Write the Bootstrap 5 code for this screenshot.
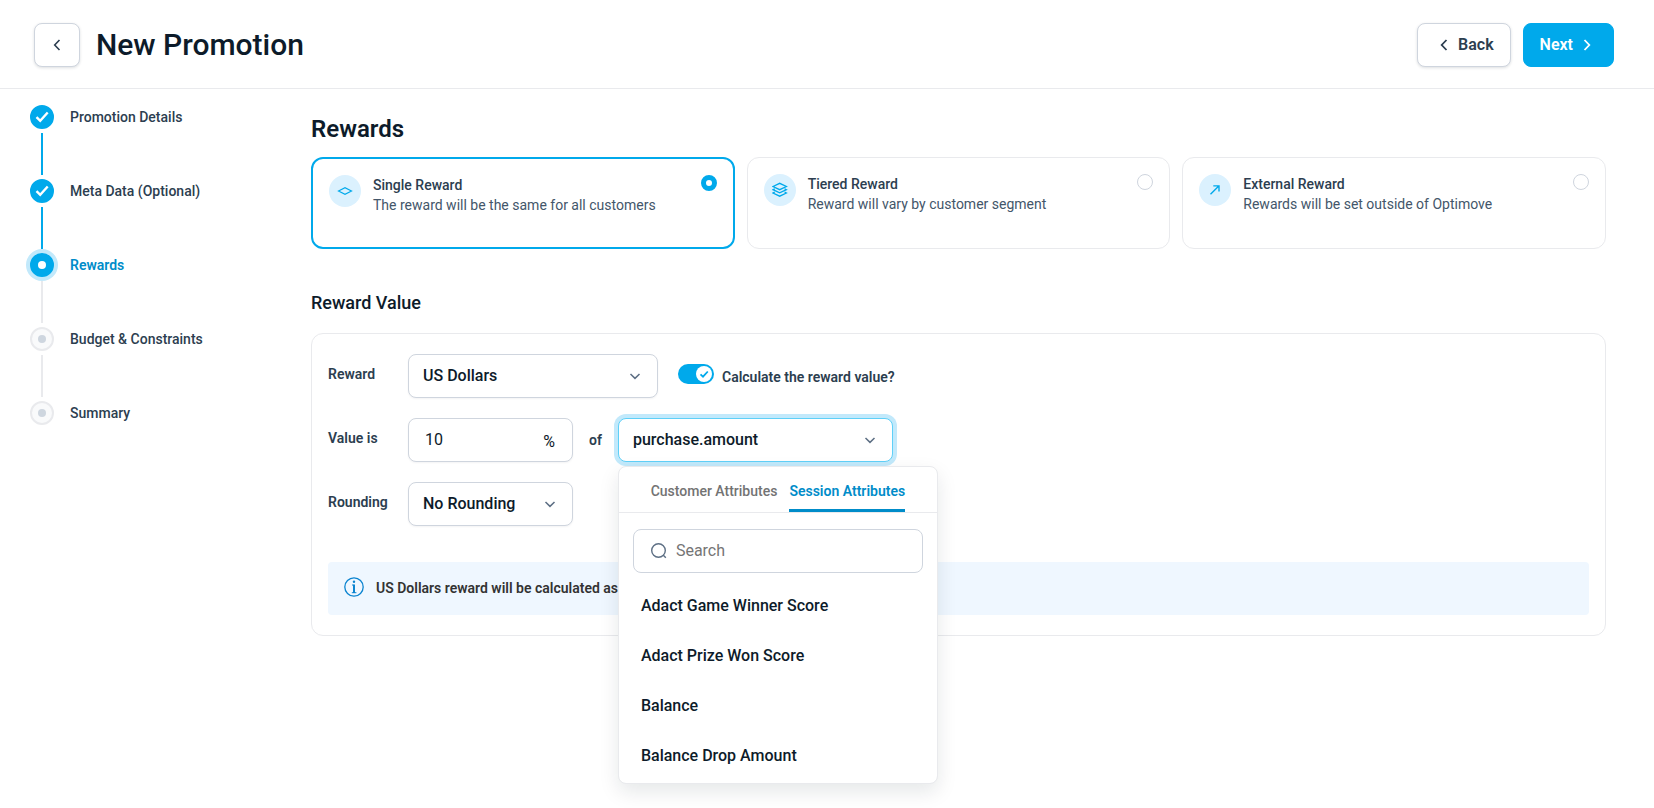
<!DOCTYPE html>
<html lang="en">
<head>
<meta charset="utf-8">
<meta name="viewport" content="width=device-width, initial-scale=1">
<title>New Promotion</title>
<link href="https://cdn.jsdelivr.net/npm/bootstrap@5.3.0/dist/css/bootstrap.min.css" rel="stylesheet">
<style>
  :root {
    --brand: #00a9eb;
    --brand-dark: #008cc9;
    --brand-soft: #dbf1fe;
    --halo: #c2e9fb;
    --ink: #0d1b2a;
    --ink-2: #2c3e50;
    --ink-3: #43566a;
    --line: #e9eaed;
    --field: #cfd5de;
  }
  body { font-family: Roboto, "Liberation Sans", sans-serif; font-size: 14px; line-height: 20px; color: var(--ink-2); }
  svg { display: block; flex: none; }

  .topbar { padding: 23px 40px 21px 34px; border-bottom: 1px solid var(--line); }
  .topbar h1 { font-size: 30px; line-height: 36px; font-weight: 500; color: var(--ink); }
  .topbar-actions { gap: 12px; }
  .action { height: 44px; border-radius: 8px; font-size: 16px; line-height: 24px; font-weight: 600; gap: 10px; }
  .action-plain { background: #fff; border: 1px solid var(--field); color: var(--ink-2); box-shadow: 0 1px 3px rgba(13, 27, 42, .14); }
  .action-square { width: 46px; }
  .action-main { background: var(--brand); border-color: var(--brand); color: #fff; }
  .action-back { padding: 0 16px 0 22px; }
  .action-next { padding: 0 22px 0 16px; }

  .stepper { width: 311px; padding: 16px 16px 0 30px; }
  .step { column-gap: 16px; }
  .step-rail { gap: 4px; margin-bottom: 4px; }
  .step-dot { width: 24px; height: 24px; border-radius: 50%; background: #f9fafb; border: 2px solid var(--line); }
  .step-dot::after { content: ""; width: 8px; height: 8px; border-radius: 50%; background: #ced6df; }
  .step-line { width: 2px; height: 42px; background: var(--line); }
  .step a { line-height: 24px; font-weight: 500; color: var(--ink-2); text-decoration: none; }
  .step-done .step-dot, .step-now .step-dot { background: var(--brand); border-color: var(--brand); }
  .step-done .step-dot::after { display: none; }
  .step-done .step-line { background: var(--brand); }
  .step-now .step-dot { box-shadow: 0 0 0 4px var(--halo); }
  .step-now .step-dot::after { background: #fff; }
  .step-now a { color: var(--brand-dark); font-weight: 600; }

  .main-col { padding: 26px 48px 48px 0; min-width: 0; }
  h2 { font-size: 24px; line-height: 28px; font-weight: 600; color: var(--ink); margin-bottom: 14px; }
  h3 { font-size: 18px; line-height: 24px; font-weight: 500; color: var(--ink); margin: 42px 0 18px; }

  .choices { --bs-gutter-x: 12px; --bs-gutter-y: 12px; }
  .choice { height: 92px; padding: 16px; border: 1px solid var(--line); border-radius: 12px; gap: 12px; cursor: pointer; }
  .choice:has(:checked) { border: 2px solid var(--brand); }
  .choice-icon { width: 32px; height: 32px; border-radius: 50%; background: var(--brand-soft); color: var(--brand); }
  .choice-title { font-weight: 500; }
  .choice-note { color: var(--ink-3); }
  .choice .form-check-input { width: 16px; height: 16px; margin: 0; flex: none; border: 1px solid var(--field); box-shadow: none; }
  .choice .form-check-input:checked { border: 5px solid var(--brand); background: #fff; }

  .panel { border: 1px solid var(--line); border-radius: 12px; padding: 20px 16px; }
  .field-row { gap: 20px; margin-bottom: 20px; }
  .field-row .form-label { width: 80px; margin: 0 -20px 0 0; line-height: 40px; font-weight: 600; }
  .field { height: 44px; border: 1px solid var(--field); border-radius: 8px; font-size: 16px; line-height: 24px; color: var(--ink); box-shadow: 0 1px 2px rgba(13, 27, 42, .05); }
  select.field { font-weight: 500; padding: 8px 40px 8px 14px; background-position: right 16px center; background-size: 12px 12px;
    background-image: url("data:image/svg+xml,%3csvg xmlns='http://www.w3.org/2000/svg' viewBox='0 0 12 12'%3e%3cpath d='M1.500 4 6 8.400 10.500 4' fill='none' stroke='%235d6f84' stroke-width='1.500'/%3e%3c/svg%3e"); }
  .w-wide { width: 250px; }
  .w-narrow { width: 165px; }
  .value-box { background: #fff; }
  .value-box input { font-size: 16px; line-height: 24px; color: var(--ink); padding: 0 0 0 16px; min-width: 0; }
  .value-box span { font-size: 16px; padding: 4px 17px 0 8px; }
  .joiner { line-height: 44px; font-weight: 600; }
  .pair { gap: 16px; }

  .form-switch { padding: 0; min-height: 0; gap: 8px; margin-top: 10px; }
  .form-switch .form-check-input { width: 36px; height: 20px; margin: 0; background-color: var(--brand); border: 0; background-position: right center;
    background-image: url("data:image/svg+xml,%3csvg xmlns='http://www.w3.org/2000/svg' viewBox='0 0 20 20'%3e%3ccircle cx='10' cy='10' r='8' fill='%23fff'/%3e%3cpath d='M6.500 10.400 9 12.700 13.800 7.500' fill='none' stroke='%2300a9eb' stroke-width='1.800'/%3e%3c/svg%3e"); }
  .form-switch label { font-weight: 600; line-height: 26px; }

  .combo { width: 275px; }
  .combo > .field { width: 100%; background: #fff; border-color: #5fd0f8; box-shadow: 0 0 0 4px var(--halo); font-weight: 500; padding: 0 16px 0 14px; }
  .combo-menu { top: 48px; left: 0; width: 320px; padding: 0 0 2px; margin: 0; border: 1px solid var(--line); border-radius: 8px; box-shadow: 0 8px 20px rgba(13, 27, 42, .1); }
  .combo-tabs { gap: 12px; border-bottom: 1px solid var(--line); }
  .combo-tabs .nav-link { padding: 14px 0 8px; border: 0; border-bottom: 3px solid transparent; border-radius: 0; background: none; font-size: 14px; line-height: 20px; font-weight: 500; color: #737373; }
  .combo-tabs .nav-link.active { color: var(--brand-dark); border-color: var(--brand-dark); font-weight: 600; background: none; }
  .search-box { margin: 16px 14px 8px; padding: 0 16px; gap: 8px; box-shadow: none; }
  .search-box input { font-size: 16px; line-height: 24px; min-width: 0; }
  .search-box input::placeholder { color: #757575; }
  .combo-menu .dropdown-item { padding: 13px 22px; font-size: 16px; line-height: 24px; font-weight: 500; color: var(--ink); }

  .note-bar { margin-top: 36px; padding: 15px 16px; gap: 12px; background: #eff7ff; border-radius: 4px; color: #333; line-height: 23px; font-weight: 600; }
</style>
</head>
<body class="bg-white min-vh-100">

<header class="topbar d-flex align-items-center justify-content-between">
  <div class="d-flex align-items-center gap-3">
    <button type="button" class="btn action action-plain action-square d-flex align-items-center justify-content-center p-0" aria-label="Go back">
      <svg width="8" height="12" viewBox="0 0 8 12" fill="none" stroke="currentColor" stroke-width="1.600"><path d="M6.500 1 1.700 6l4.800 5"/></svg>
    </button>
    <h1 class="mb-0">New Promotion</h1>
  </div>
  <div class="topbar-actions d-flex">
    <button type="button" class="btn action action-plain action-back d-flex align-items-center">
      <svg width="8" height="12" viewBox="0 0 8 12" fill="none" stroke="currentColor" stroke-width="1.800"><path d="M6.500 1 1.700 6l4.800 5"/></svg>
      Back
    </button>
    <button type="button" class="btn action action-main action-next d-flex align-items-center">
      Next
      <svg width="8" height="12" viewBox="0 0 8 12" fill="none" stroke="currentColor" stroke-width="1.800"><path d="m1.500 1 4.800 5-4.800 5"/></svg>
    </button>
  </div>
</header>

<div class="d-flex">
  <nav class="stepper flex-shrink-0" aria-label="Progress">
    <ol class="list-unstyled mb-0">
      <li class="step step-done d-flex">
        <div class="step-rail d-flex flex-column align-items-center">
          <span class="step-dot d-flex align-items-center justify-content-center"><svg width="14" height="12" viewBox="0 0 14 12" fill="none" stroke="#fff" stroke-width="2.400"><path d="m1.500 6.200 3.700 3.600L12.700 1.500"/></svg></span>
          <span class="step-line"></span>
        </div>
        <a href="#details">Promotion Details</a>
      </li>
      <li class="step step-done d-flex">
        <div class="step-rail d-flex flex-column align-items-center">
          <span class="step-dot d-flex align-items-center justify-content-center"><svg width="14" height="12" viewBox="0 0 14 12" fill="none" stroke="#fff" stroke-width="2.400"><path d="m1.500 6.200 3.700 3.600L12.700 1.500"/></svg></span>
          <span class="step-line"></span>
        </div>
        <a href="#meta">Meta Data (Optional)</a>
      </li>
      <li class="step step-now d-flex">
        <div class="step-rail d-flex flex-column align-items-center">
          <span class="step-dot d-flex align-items-center justify-content-center"></span>
          <span class="step-line"></span>
        </div>
        <a href="#rewards" aria-current="step">Rewards</a>
      </li>
      <li class="step d-flex">
        <div class="step-rail d-flex flex-column align-items-center">
          <span class="step-dot d-flex align-items-center justify-content-center"></span>
          <span class="step-line"></span>
        </div>
        <a href="#budget">Budget &amp; Constraints</a>
      </li>
      <li class="step d-flex">
        <div class="step-rail d-flex flex-column align-items-center">
          <span class="step-dot d-flex align-items-center justify-content-center"></span>
        </div>
        <a href="#summary">Summary</a>
      </li>
    </ol>
  </nav>

  <main class="main-col flex-grow-1">
    <h2>Rewards</h2>
    <div class="row choices">
      <div class="col-4">
        <label class="choice d-flex align-items-start" for="single">
          <span class="choice-icon d-flex align-items-center justify-content-center flex-shrink-0">
            <svg width="16" height="16" viewBox="0 0 16 16" fill="none" stroke="currentColor" stroke-width="1.200"><path d="m1.500 8 6.500-3.400L14.500 8 8 11.400z"/></svg>
          </span>
          <span class="flex-grow-1"><span class="choice-title d-block">Single Reward</span><span class="choice-note d-block">The reward will be the same for all customers</span></span>
          <input class="form-check-input" type="radio" name="kind" id="single" checked>
        </label>
      </div>
      <div class="col-4">
        <label class="choice d-flex align-items-start" for="tiered">
          <span class="choice-icon d-flex align-items-center justify-content-center flex-shrink-0">
            <svg width="16" height="16" viewBox="0 0 16 16" fill="none" stroke="currentColor" stroke-width="1.300"><path d="M1 4.500 7.700 1.300l6.700 3.200-6.700 3.200zM2.800 6.700 1 7.700l6.700 3.200 6.700-3.200-1.800-1M2.800 10 1 11l6.700 3.200 6.700-3.200-1.800-1"/></svg>
          </span>
          <span class="flex-grow-1"><span class="choice-title d-block">Tiered Reward</span><span class="choice-note d-block">Reward will vary by customer segment</span></span>
          <input class="form-check-input" type="radio" name="kind" id="tiered">
        </label>
      </div>
      <div class="col-4">
        <label class="choice d-flex align-items-start" for="external">
          <span class="choice-icon d-flex align-items-center justify-content-center flex-shrink-0">
            <svg width="16" height="16" viewBox="0 0 16 16" fill="none" stroke="currentColor" stroke-width="1.400"><path d="m3.500 12.300 8.300-8.300M6.300 3.900h5.700v5.700"/></svg>
          </span>
          <span class="flex-grow-1"><span class="choice-title d-block">External Reward</span><span class="choice-note d-block">Rewards will be set outside of Optimove</span></span>
          <input class="form-check-input" type="radio" name="kind" id="external">
        </label>
      </div>
    </div>

    <h3>Reward Value</h3>
    <section class="panel">
      <div class="field-row d-flex align-items-start">
        <label class="form-label" for="currency">Reward</label>
        <select class="form-select field w-wide" id="currency"><option>US Dollars</option></select>
        <div class="form-switch d-flex align-items-start">
          <input class="form-check-input" type="checkbox" role="switch" id="calc" checked>
          <label for="calc">Calculate the reward value?</label>
        </div>
      </div>

      <div class="field-row d-flex align-items-start">
        <label class="form-label" for="amount">Value is</label>
        <div class="pair d-flex">
          <div class="field value-box w-narrow d-flex align-items-center">
            <input class="border-0 bg-transparent w-100" type="text" id="amount" value="10">
            <span>%</span>
          </div>
          <span class="joiner">of</span>
          <div class="combo dropdown">
            <button type="button" class="field d-flex align-items-center justify-content-between" aria-haspopup="true" aria-expanded="true">
              purchase.amount
              <svg width="12" height="12" viewBox="0 0 12 12" fill="none" stroke="#5d6f84" stroke-width="1.500"><path d="M1.500 4 6 8.400 10.500 4"/></svg>
            </button>
            <div class="combo-menu dropdown-menu show">
              <div class="combo-tabs nav justify-content-center" role="tablist">
                <button type="button" class="nav-link" role="tab" aria-selected="false">Customer Attributes</button>
                <button type="button" class="nav-link active" role="tab" aria-selected="true">Session Attributes</button>
              </div>
              <div class="search-box field d-flex align-items-center">
                <svg width="18" height="18" viewBox="0 0 18 18" fill="none" stroke="#5d6f84" stroke-width="1.400"><circle cx="8.500" cy="8.500" r="6.800"/><path d="m13.300 13.300 2.500 2.500"/></svg>
                <input class="border-0 bg-transparent flex-grow-1 p-0" type="search" placeholder="Search" aria-label="Search attributes">
              </div>
              <a class="dropdown-item" href="#winner">Adact Game Winner Score</a>
              <a class="dropdown-item" href="#prize">Adact Prize Won Score</a>
              <a class="dropdown-item" href="#balance">Balance</a>
              <a class="dropdown-item" href="#drop">Balance Drop Amount</a>
            </div>
          </div>
        </div>
      </div>

      <div class="field-row d-flex align-items-start mb-0">
        <label class="form-label" for="rounding">Rounding</label>
        <select class="form-select field w-narrow" id="rounding"><option>No Rounding</option></select>
      </div>

      <div class="note-bar d-flex align-items-start">
        <svg width="20" height="20" viewBox="0 0 20 20" fill="none" stroke="#0b84d0" stroke-width="1.300"><circle cx="10" cy="10" r="9.200"/><path d="M8 8h1.500M7.800 15.700h4.600" stroke-width="1"/><path d="M10 7.500v8.500" stroke-width="2"/><circle cx="10" cy="4.800" r="1.200" fill="#0b84d0" stroke="none"/></svg>
        <span>US Dollars reward will be calculated as</span>
      </div>
    </section>
  </main>
</div>

<script src="https://cdn.jsdelivr.net/npm/bootstrap@5.3.0/dist/js/bootstrap.bundle.min.js"></script>
</body>
</html>
